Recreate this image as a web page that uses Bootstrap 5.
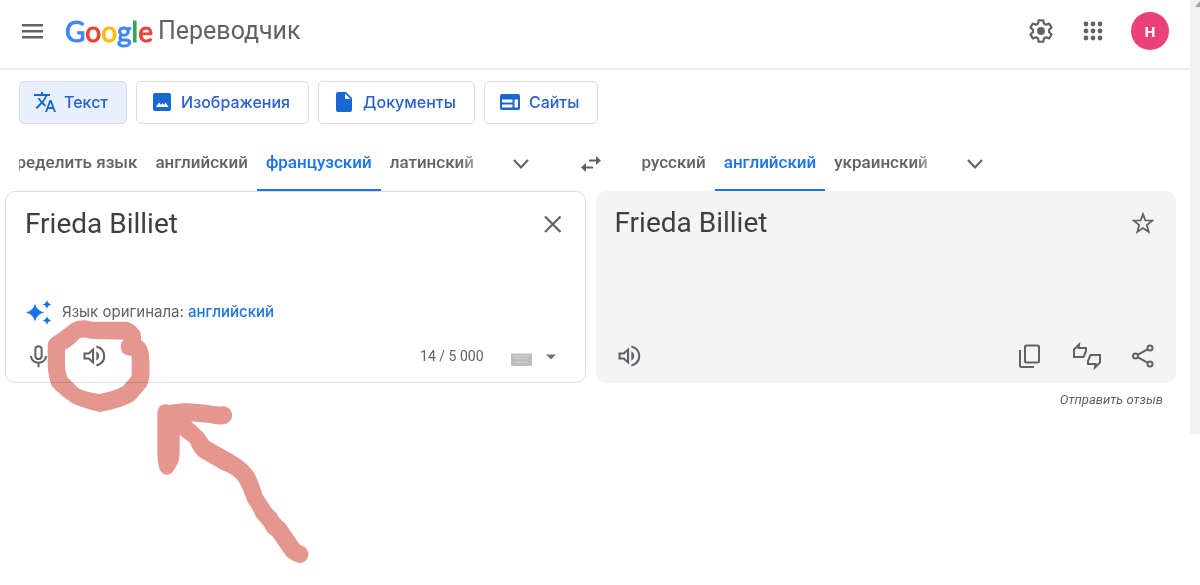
<!DOCTYPE html>
<html lang="ru">
<head>
<meta charset="utf-8">
<meta name="viewport" content="width=device-width, initial-scale=1">
<title>Google Переводчик</title>
<link href="https://cdn.jsdelivr.net/npm/bootstrap@5.3.0/dist/css/bootstrap.min.css" rel="stylesheet">
<style>
  :root { --ink: #5f6368; --dark: #3c4043; --blue: #1a73e8; --line: #ebebeb; }
  body { font-family: Roboto, "Liberation Sans", sans-serif; color: var(--ink); background: #fff; }
  svg { display: block; flex: none; }
  a { text-decoration: none; color: inherit; }
  .icon-btn { background: none; border: 0; padding: 0; color: var(--ink); display: block; }
  .scroll-strip { width: 10px; height: 434px; background: #f1f1f1; }
  .top-bar { height: 70px; padding: 0 21px 7px; border-bottom: 2px solid var(--line); }
  .brand { gap: 5px; padding-left: 22px; line-height: 36px; }
  .g-logo { font: 400 28px/36px Lato, sans-serif; -webkit-text-stroke: 1px; }
  .product { font-size: 25px; }
  .avatar { width: 38px; height: 38px; border-radius: 50%; border: 0; background: #ec407a; color: #fff; font: 700 15px/38px "Open Sans", sans-serif; padding: 0; }
  .modes { gap: 9px; padding: 11px 19px 0; }
  .mode { height: 43px; padding: 0 18px 2px 14px; gap: 8px; border: 1px solid #dadce0; border-radius: 5px; background: #fff; color: #2a5fd0; font: 500 16px/20px Inter, sans-serif; }
  .mode.on { background: #e8f0fe; }
  .work { padding: 0 14px 0 5px; }
  .langs { display: grid; grid-template-columns: 1fr 44px 1fr; height: 67px; }
  .langs .icon-btn { padding-top: 13px; }
  .tabs { position: relative; overflow: hidden; }
  .tabs-src { width: 464px; margin-left: 14px; justify-content: flex-end; }
  .tabs-dst { margin-left: 20px; }
  .fade-end::after { content: ""; position: absolute; right: 0; top: 0; width: 24px; height: 60px; background: linear-gradient(90deg, #fff0, #fffa); pointer-events: none; }
  .lang { border: 0; border-bottom: 2px solid transparent; background: none; padding: 13px 9px 0; white-space: nowrap; font-weight: 500; font-size: 17px; color: var(--ink); }
  .lang.on { color: var(--blue); border-color: var(--blue); }
  .panes { display: grid; grid-template-columns: 1fr 1fr; gap: 10px; }
  .pane { border-radius: 10px; border: 1px solid #dedede; padding: 12px 21px 8px 19px; }
  .pane-out { background: #f4f4f4; border-color: #f4f4f4; padding-left: 18px; }
  .entry { border: 0; outline: 0; resize: none; overflow: hidden; padding: 0; height: 90px; font-size: 28px; line-height: 40px; color: var(--dark); background: none; }
  .out-text { font-size: 28px; line-height: 38px; color: var(--dark); }
  .hint { font: 400 15px/24px Inter, sans-serif; gap: 9px; height: 36px; }
  .hint a { color: var(--blue); font-weight: 500; }
  .count { font-size: 14px; }
  .tools { height: 36px; }
  .feedback { font-size: 13px; line-height: 20px; padding: 7px 13px 0 0; }
  .marker { position: absolute; left: 0; top: 0; pointer-events: none; mix-blend-mode: multiply; }
</style>
</head>
<body class="position-relative min-vh-100">
<div class="d-flex">
<div class="flex-grow-1">
  <header class="top-bar d-flex align-items-center">
    <button class="icon-btn" aria-label="Меню"><svg width="22" height="16" viewBox="0 0 22 16" fill="currentColor"><path d="M1 1h21v2.500H1zM1 7h21v2.500H1zM1 13h21v2.500H1z"/></svg></button>
    <a href="#" class="brand d-flex align-items-center">
      <span class="g-logo"><span style="color:#4285f4">G</span><span style="color:#ea4335">o</span><span style="color:#fbbc04">o</span><span style="color:#4285f4">g</span><span style="color:#34a853">l</span><span style="color:#ea4335">e</span></span>
      <span class="product">Переводчик</span>
    </a>
    <div class="ms-auto d-flex align-items-center">
      <button class="icon-btn me-4" aria-label="Настройки"><svg width="28" height="28" viewBox="0 0 24 24" fill="none" stroke="currentColor" stroke-width="1.900" stroke-linejoin="round"><path d="M10 2.800h4l.5 2.700 1.900 1.100 2.600-1 2 3.500-2.100 1.800v2.200l2.100 1.800-2 3.500-2.600-1-1.900 1.100-.5 2.700h-4l-.5-2.700-1.900-1.100-2.600 1-2-3.500 2.100-1.800v-2.200L3 9.100l2-3.500 2.600 1 1.900-1.100z"/><circle cx="12" cy="12" r="3.400" fill="currentColor" stroke="none"/></svg></button>
      <button class="icon-btn" aria-label="Приложения Google"><svg width="28" height="28" viewBox="0 0 28 28" fill="currentColor"><circle cx="7" cy="7" r="2.400"/><circle cx="14" cy="7" r="2.400"/><circle cx="21" cy="7" r="2.400"/><circle cx="7" cy="14" r="2.400"/><circle cx="14" cy="14" r="2.400"/><circle cx="21" cy="14" r="2.400"/><circle cx="7" cy="21" r="2.400"/><circle cx="14" cy="21" r="2.400"/><circle cx="21" cy="21" r="2.400"/></svg></button>
      <button class="avatar ms-4" aria-label="Аккаунт">Н</button>
    </div>
  </header>

  <nav class="modes d-flex">
    <button class="mode on d-flex align-items-center"><svg width="22" height="22" viewBox="1 1 22 22" fill="#1967d2"><path d="M12.870 15.070l-2.540-2.510.03-.03A17.520 17.520 0 0014.070 6H17V4h-7V2H8v2H1v1.990h11.170C11.500 7.920 10.440 9.750 9 11.350 8.070 10.320 7.300 9.190 6.690 8h-2c.73 1.630 1.730 3.170 2.980 4.560l-5.090 5.020L4 19l5-5 3.110 3.110.76-2.040zM18.500 10h-2L12 22h2l1.120-3h4.750L21 22h2l-4.500-12zm-2.620 7l1.620-4.330L19.120 17h-3.240z"/></svg>Текст</button>
    <button class="mode d-flex align-items-center"><svg width="22" height="22" viewBox="0 0 22 22"><rect x="2" y="2" width="18" height="18" rx="2" fill="#1967d2"/><path d="M5 16l3-4.500 2 2.500 1.500-2 1.500 2 1.500-2.500L17.500 16z" fill="#fff"/></svg>Изображения</button>
    <button class="mode d-flex align-items-center"><svg width="22" height="22" viewBox="0 0 22 22"><path d="M5 1h8l6 6v12q0 2-2 2H5q-2 0-2-2V3q0-2 2-2z" fill="#1967d2"/><path d="M12 2.500V8h5.500z" fill="#fff"/></svg>Документы</button>
    <button class="mode d-flex align-items-center"><svg width="22" height="22" viewBox="0 0 22 22"><rect x="1" y="3" width="20" height="16" rx="2" fill="#1967d2"/><path d="M3 8.500h10.500v3H3zM3 13.500h10.500v3H3zM15.500 8.500H19v8h-3.500z" fill="#fff"/></svg>Сайты</button>
  </nav>

  <main class="work">
    <div class="langs">
      <div class="d-flex align-items-stretch">
        <div class="tabs tabs-src fade-end d-flex flex-shrink-0">
          <button class="lang">Определить язык</button><button class="lang">английский</button><button class="lang on">французский</button><button class="lang">латинский</button>
        </div>
        <button class="icon-btn ms-4" aria-label="Другие языки"><svg class="mx-1" width="20" height="20" viewBox="0 0 20 20" fill="none" stroke="currentColor" stroke-width="2"><path d="M3 6l7 7.500L17 6"/></svg></button>
      </div>
      <button class="icon-btn mx-auto" aria-label="Поменять языки"><svg width="24" height="20" viewBox="0 0 24 20" fill="currentColor"><path d="M10 5.500h7V2L22 6.500 17 11V7.500h-7zM14 12.500H7V9l-5 4.500L7 18v-3.500h7z"/></svg></button>
      <div class="d-flex align-items-stretch">
        <div class="tabs tabs-dst fade-end d-flex">
          <button class="lang">русский</button><button class="lang on">английский</button><button class="lang">украинский</button>
        </div>
        <button class="icon-btn ms-4" aria-label="Другие языки"><svg class="mx-1" width="20" height="20" viewBox="0 0 20 20" fill="none" stroke="currentColor" stroke-width="2"><path d="M3 6l7 7.500L17 6"/></svg></button>
      </div>
    </div>

    <div class="panes">
      <section class="pane d-flex flex-column">
        <div class="d-flex align-items-start">
          <textarea class="entry flex-grow-1" aria-label="Исходный текст" spellcheck="false">Frieda Billiet</textarea>
          <button class="icon-btn mt-2" aria-label="Очистить"><svg width="22" height="24" viewBox="0 0 22 24" fill="none" stroke="currentColor" stroke-width="2.200"><path d="M3 4.500l15.500 15.500M18.500 4.500L3 20"/></svg></button>
        </div>
        <div class="hint d-flex align-items-center">
          <svg width="28" height="28" viewBox="0 0 28 28" fill="#1a73e8"><path d="M10 5.500Q11.500 12.500 19 14.500 11.500 16.500 10 23.500 8.500 16.500 1 14.500 8.500 12.500 10 5.500zM22 2q.8 3.600 4.500 4.500-3.700.9-4.500 4.500-.8-3.600-4.500-4.500 3.700-.9 4.500-4.500zM22 18q.8 3.600 4.500 4.500-3.700.9-4.500 4.500-.8-3.600-4.500-4.500 3.700-.9 4.500-4.500z"/></svg>
          <span>Язык оригинала: <a href="#">английский</a></span>
        </div>
        <div class="tools d-flex align-items-center mt-2">
          <button class="icon-btn" aria-label="Голосовой ввод"><svg width="27" height="27" viewBox="0 0 24 24" fill="none" stroke="currentColor" stroke-width="1.800"><rect x="9.200" y="2.800" width="5.600" height="11.500" rx="2.800"/><path d="M5.300 11.500c0 8 13.400 8 13.400 0M12 17.500V21.500"/></svg></button>
          <button class="icon-btn ms-4 ps-1" aria-label="Прослушать"><svg width="28" height="28" viewBox="0 0 24 24" fill="none" stroke="currentColor" stroke-width="1.800"><path d="M3.900 9.800h3.700l3.600-3.300v11l-3.600-3.300H3.900zM14 3.900c9 2.400 9 13.800 0 16.200"/><path d="M14 8v8c3.200-1.600 3.200-6.400 0-8z" fill="currentColor" stroke="none"/></svg></button>
          <span class="count ms-auto">14 / 5 000</span>
          <button class="icon-btn d-flex align-items-center ms-4" aria-label="Клавиатура"><svg width="56" height="20" viewBox="0 0 56 20"><rect x="3" y="7.500" width="21" height="12.500" rx="1" fill="#bdbdbd"/><path d="M5 10h17M7 12.500h13M8 16h11" stroke="#d0d0d0" stroke-width="1.500" stroke-dasharray="2 1"/><path d="M38 8.500h10l-5 5z" fill="#757575"/></svg></button>
        </div>
      </section>

      <section class="pane pane-out d-flex flex-column">
        <div class="out-text d-flex justify-content-between">
          <span>Frieda Billiet</span>
          <button class="icon-btn align-self-start mt-1" aria-label="Сохранить перевод"><svg width="24" height="28" viewBox="0 0 24 28" fill="none" stroke="currentColor" stroke-width="1.800"><path d="M13 6l2.300 6.300 7 .3-5.500 4.400 1.900 6.800L13 20l-5.700 3.800 1.900-6.800-5.500-4.400 7-.3z"/></svg></button>
        </div>
        <div class="tools d-flex align-items-center mt-auto">
          <button class="icon-btn" aria-label="Прослушать перевод"><svg width="28" height="28" viewBox="0 0 24 24" fill="none" stroke="currentColor" stroke-width="1.800"><path d="M3.900 9.800h3.700l3.600-3.300v11l-3.600-3.300H3.900zM14 3.900c9 2.400 9 13.800 0 16.200"/><path d="M14 8v8c3.200-1.600 3.200-6.400 0-8z" fill="currentColor" stroke="none"/></svg></button>
          <div class="ms-auto d-flex gap-4">
            <button class="icon-btn me-1" aria-label="Копировать"><svg width="28" height="28" viewBox="0 0 28 28" fill="none" stroke="currentColor" stroke-width="2"><rect x="11" y="3.500" width="14" height="17" rx="1.500"/><path d="M6 8v15.500q0 1.500 1.500 1.500H20"/></svg></button>
            <button class="icon-btn me-1" aria-label="Оценить перевод"><svg width="32" height="28" viewBox="0 0 32 28" fill="none" stroke="currentColor" stroke-width="2"><path d="M4 7.500L9 2.500 8.500 6H16v3l-2.500 6H4zM30 20.500l-5 5 .5-3.500H18v-3l2.500-6H30z"/></svg></button>
            <button class="icon-btn" aria-label="Поделиться"><svg width="24" height="28" viewBox="0 0 24 28" fill="none" stroke="currentColor" stroke-width="2"><circle cx="20" cy="6" r="2.500"/><circle cx="5.500" cy="14" r="2.500"/><circle cx="20" cy="22" r="2.500"/><path d="M8 12.700L17.500 7.300M8 15.300l9.500 5.400"/></svg></button>
          </div>
        </div>
      </section>
    </div>
    <div class="feedback text-end fst-italic"><a href="#">Отправить отзыв</a></div>
  </main>
</div>
<div class="scroll-strip"><svg width="10" height="10" viewBox="0 0 10 10"><path d="M10 1v6H5z" fill="#a3a3a3"/></svg></div>
</div>

<svg class="marker" width="320" height="585" viewBox="0 -870 960 1755" fill="#e5968f" aria-hidden="true">
  <path fill-rule="evenodd" d="M143 170Q143 150 155 143L180 127 215 100Q240 85 275 95H380Q400 98 418 122 424 130 423 150 440 160 445 185 450 210 448 260 446 278 438 292L405 330Q375 352 300 366 240 352 215 338 180 315 155 287 142 250 143 215zM195 180Q215 170 240 144 255 140 270 146L371 149Q355 165 367 187 375 197 395 198V258L370 288Q340 305 298 312 250 305 235 295L202 262Q195 245 195 225z"/>
  <path d="M472 375C472 350 485 338 508 345 560 335 590 342 625 345Q640 350 670 349C705 352 705 400 670 403Q650 405 625 398 600 398 573 394L610 428Q618 440 627 453L700 494Q745 520 763 550 775 575 788 615L805 640Q812 655 830 670 835 685 855 700L900 765C930 770 937 812 900 820Q880 815 860 800L817 738Q800 728 793 710L768 680Q760 660 745 640 735 615 725 590L713 570Q695 550 665 540L597 500Q580 485 570 458L539 435V480Q540 515 527 530C515 562 485 562 477 532Q471 505 472 480z"/>
</svg>
<script src="https://cdn.jsdelivr.net/npm/bootstrap@5.3.0/dist/js/bootstrap.bundle.min.js"></script>
</body>
</html>
